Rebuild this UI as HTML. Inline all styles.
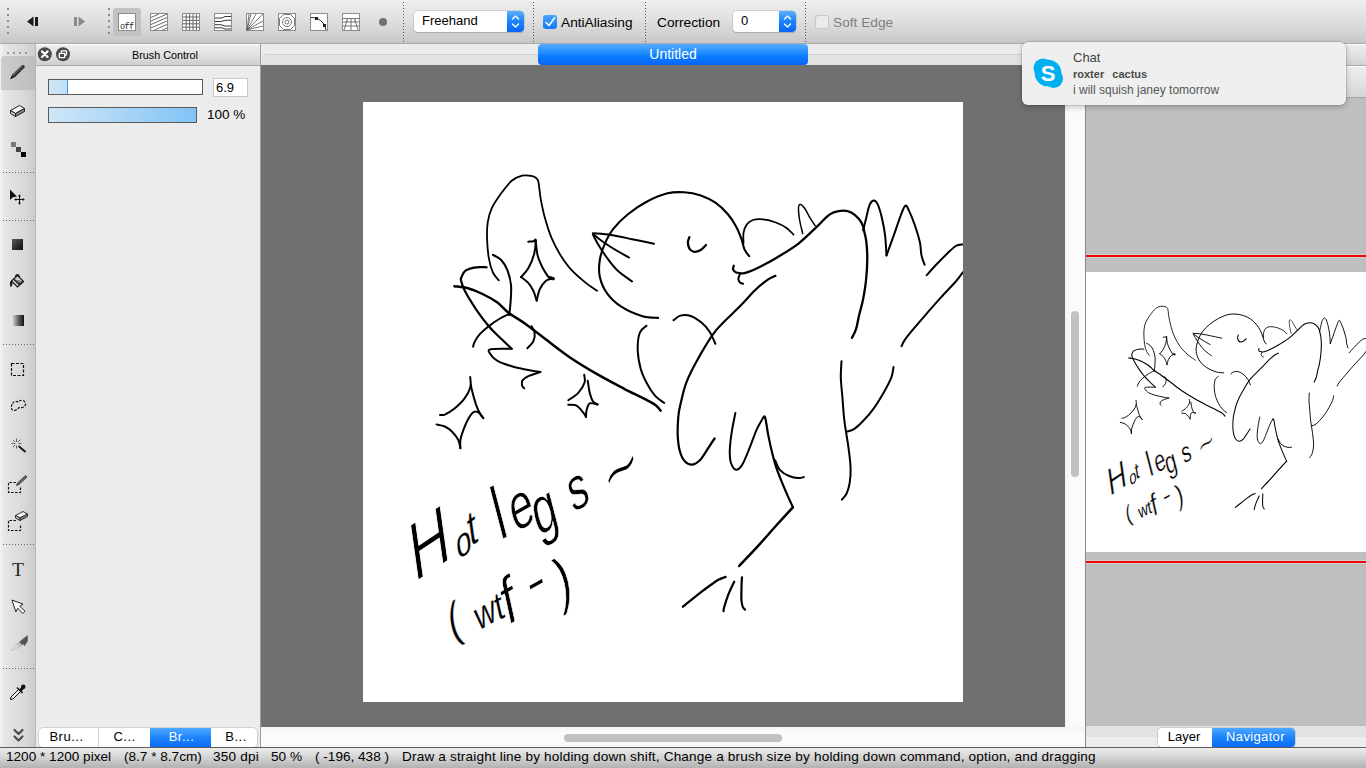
<!DOCTYPE html>
<html lang="en">
<head>
<meta charset="utf-8">
<title>Untitled</title>
<style>
*{box-sizing:border-box;margin:0;padding:0}
html,body{width:1366px;height:768px;overflow:hidden}
body{position:relative;background:#ececec;font-family:"Liberation Sans",sans-serif;font-size:13px;color:#000}
.abs{position:absolute}
#topbar{left:0;top:0;width:1366px;height:44px;background:linear-gradient(#f8f8f8 0,#ececec 1px,#e5e5e5 14px,#d6d6d6 30px,#c7c7c7 100%);border-bottom:1px solid #a9a9a9}
.vdot{position:absolute;width:1px;top:2px;height:40px;background:repeating-linear-gradient(#555 0,#555 1px,transparent 1px,transparent 3px)}
.vdot5{position:absolute;width:2px;top:8px;height:27px;background:repeating-linear-gradient(#8a8a8a 0,#8a8a8a 2px,transparent 2px,transparent 6px)}
.tbi{position:absolute;top:13px;width:18px;height:18px;background:#fff;border:1px solid #8c8c8c}
.sel{position:absolute;top:11px;height:21px;background:#fff;border-radius:4px;box-shadow:0 0 0 .5px #b9b9b9,0 1px 1px rgba(0,0,0,.25);overflow:hidden}
.sel span{position:absolute;left:8px;top:2px;font-size:13px;line-height:15px}
.sel i{position:absolute;right:0;top:0;width:17px;height:21px;background:linear-gradient(#5cb0ff,#1b82fb 50%,#0a64f5)}
.lbl{position:absolute;font-size:13.7px;line-height:16px;white-space:nowrap}
#tools{left:0;top:44px;width:36px;height:703px;background:linear-gradient(90deg,#f4f4f4 0,#e6e6e6 12%,#d8d8d8 70%,#cdcdcd 100%);border-right:1px solid #b6b6b6}
.hdot{position:absolute;left:3px;width:31px;height:1px;background:repeating-linear-gradient(90deg,#666 0,#666 1px,transparent 1px,transparent 3px)}
#panel{left:36px;top:44px;width:224px;height:703px;background:#ececec}
#ptitle{left:0;top:0;width:224px;height:22px;background:linear-gradient(#fff 0,#fff 1px,#ededed 1px,#e2e2e2 50%,#cfcfcf);border-bottom:1px solid #ababab}
.tabs{position:absolute;height:20px;background:#fff;border-radius:4px;box-shadow:0 0 0 .5px #b5b5b5,0 1px 1px rgba(0,0,0,.2);overflow:hidden;font-size:13px}
.tabs span{position:absolute;top:0;height:20px;line-height:17px;text-align:center;white-space:nowrap;letter-spacing:.5px}
.tabs .on{background:linear-gradient(#4fa8ff,#1a83fb 50%,#0b69f6);color:#fff}
#canvasarea{left:261px;top:44px;width:804px;height:683px;background:#707070}
#chead{left:261px;top:44px;width:824px;height:21px;background:#ececec}
#chead div{position:absolute;left:1px;top:10px;right:0;bottom:0;background:#e3e3e3;border-top:1px solid #d3d3d3;border-left:1px solid #dcdcdc;border-top-left-radius:4px}
#doc{left:538px;top:44px;width:270px;height:21px;border-radius:4px;background:linear-gradient(#56abff 0,#1e8bff 45%,#0a7aff 60%,#0a66f5 100%);color:#fff;text-align:center;font-size:14px;line-height:20px}
#paper{left:363px;top:102px;width:600px;height:600px;background:#fff}
#vscroll{left:1065px;top:65px;width:20px;height:662px;background:linear-gradient(90deg,#f3f3f3,#fbfbfb 30%,#fafafa)}
#hscroll{left:261px;top:727px;width:824px;height:20px;background:linear-gradient(#f5f5f5,#fcfcfc 30%,#fafafa)}
#nav{left:1085px;top:44px;width:281px;height:682px;background:#bfbfbf;border-left:1px solid #8a8a8a}
#navfoot{left:1085px;top:726px;width:281px;height:21px;background:linear-gradient(#e3e3e3 0,#e2e2e2 11px,#ededed 11px,#ececec 100%);border-left:1px solid #8a8a8a}
#status{left:0;top:747px;width:1366px;height:21px;background:linear-gradient(#ececec 0,#d8d8d8 40%,#b2b2b2 100%);border-top:1px solid #5c5c5c;font-size:13.6px;line-height:17px;white-space:nowrap}
#status span{position:absolute;top:0}
#note{left:1022px;top:42px;width:324px;height:63px;border-radius:6px;background:#efefef;box-shadow:0 0 0 .5px rgba(0,0,0,.18),0 2px 6px rgba(0,0,0,.22)}
#note div{position:absolute;left:51px;white-space:nowrap}
</style>
</head>
<body>
<!-- top toolbar -->
<div id="topbar" class="abs">
  <div class="vdot5" style="left:7px"></div>
  <div class="vdot5" style="left:108px"></div>
  <svg class="abs" style="left:0;top:0" width="410" height="43" viewBox="0 0 410 43">
    <!-- back / forward -->
    <path d="M27 21.5 L33.5 16.5 V26.5Z" fill="#1a1a1a"/><rect x="35" y="17" width="3" height="9" fill="#1a1a1a"/>
    <path d="M85 21.5 L78.5 16.5 V26.5Z" fill="#8a8a8a"/><rect x="74" y="17" width="3" height="9" fill="#8a8a8a"/>
    <!-- selected off button bg -->
    <rect x="113" y="8" width="28" height="28" rx="3" fill="#c2c2c2"/>
    <g fill="#fff" stroke="#8c8c8c" stroke-width="1">
      <rect x="118.500" y="13.500" width="17" height="17"/>
      <rect x="150.500" y="13.500" width="17" height="17"/>
      <rect x="182.500" y="13.500" width="17" height="17"/>
      <rect x="214.500" y="13.500" width="17" height="17"/>
      <rect x="246.500" y="13.500" width="17" height="17"/>
      <rect x="278.500" y="13.500" width="17" height="17"/>
      <rect x="310.500" y="13.500" width="17" height="17"/>
      <rect x="342.500" y="13.500" width="17" height="17"/>
    </g>
    <text x="120" y="28.700" font-family="Liberation Mono,monospace" font-size="8.500" fill="#222" textLength="14">off</text>
    <!-- hatch -->
    <g stroke="#555" stroke-width=".8" fill="none">
      <path d="M151 17.500L159 14M151 21L167 14M151 24.500L167 17.500M151 28L167 21M154.400 30L167 24.500M162.400 30L167 28" stroke="#444"/>
      <!-- grid -->
      <path d="M186.200 14V30M189.600 14V30M193 14V30M196.400 14V30M183 17H199M183 20.400H199M183 23.800H199M183 27.200H199" stroke="#666" stroke-width="1"/>
      <!-- horizontal curves -->
      <path d="M215 18H222L225 16.500H231M215 21.500H221L225 20.300H231M215 24.700H221L225 26H231M215 27.800H222L225 29H231" stroke="#3a3a3a" stroke-width="1"/>
      <!-- radial -->
      <path d="M247 30L251 14M247 30L256 14M247 30L263 14M247 30L263 21M247 30L263 26M247 30L249 14"/>
      <!-- concentric -->
      <circle cx="287" cy="22" r="2"/><circle cx="287" cy="22" r="4.500"/><path d="M283.500 14.500H290.500L294.500 18.500V25.500L290.500 29.500H283.500L279.500 25.500V18.500Z"/>
      <!-- curve -->
      <path d="M311 17.500C318 17.500 324 21 326 30" stroke="#222" stroke-width="1"/>
      <!-- perspective -->
      <path d="M343 18.500H359M343 22H359M343 26H359M347.500 18.500L344 30M351 18.500V30M354.500 18.500L358 30M347 20.500V22M355 20.500V22"/>
    </g>
    <rect x="315" y="17" width="3" height="3" fill="#222"/><rect x="323" y="24" width="3" height="3" fill="#222"/>
    <circle cx="383" cy="22" r="4" fill="#707070"/>
  </svg>
  <div class="vdot" style="left:403px"></div>
  <div class="sel" style="left:414px;width:110px"><span>Freehand</span><i></i></div>
  <div class="vdot" style="left:533px"></div>
  <div class="abs" style="left:543px;top:15px;width:14px;height:14px;border-radius:3px;background:linear-gradient(#4aa3ff,#1278f5)"></div>
  <div class="lbl" style="left:561px;top:15px">AntiAliasing</div>
  <div class="vdot" style="left:645px"></div>
  <div class="lbl" style="left:657px;top:15px">Correction</div>
  <div class="sel" style="left:733px;width:63px"><span>0</span><i></i></div>
  <div class="vdot" style="left:805px"></div>
  <div class="abs" style="left:815px;top:15px;width:14px;height:14px;border-radius:3px;background:#ebebeb;border:1px solid #c6c6c6"></div>
  <div class="lbl" style="left:833px;top:15px;color:#808080">Soft Edge</div>
  <svg class="abs" style="left:400px;top:0" width="420" height="43" viewBox="400 0 420 43" fill="none" stroke="#fff" stroke-width="1.400" stroke-linecap="round" stroke-linejoin="round">
    <path d="M512.500 19L515.500 16L518.500 19M512.500 24L515.500 27L518.500 24"/>
    <path d="M784.500 19L787.500 16L790.500 19M784.500 24L787.500 27L790.500 24"/>
    <path d="M546 22.500L549 25.500L554.500 18" stroke-width="1.600"/>
  </svg>
</div>

<!-- left tools -->
<div id="tools" class="abs">
<svg class="abs" style="left:0;top:0" width="36" height="703" viewBox="0 44 36 703">
  <defs>
    <linearGradient id="gsel" x1="0" x2="1" y1="0" y2="0"><stop offset="0" stop-color="#cdcdcd"/><stop offset="1" stop-color="#bdbdbd"/></linearGradient>
    <linearGradient id="gsq" x1="0" x2="1" y1="0" y2="1"><stop offset="0" stop-color="#5a5a5a"/><stop offset="1" stop-color="#0a0a0a"/></linearGradient>
    <linearGradient id="ggr" x1="0" x2="1" y1="0" y2="0"><stop offset="0" stop-color="#f4f4f4"/><stop offset=".55" stop-color="#666"/><stop offset="1" stop-color="#111"/></linearGradient>
    <linearGradient id="gkn" x1="0" x2="1" y1="1" y2="0"><stop offset="0" stop-color="#fff"/><stop offset=".5" stop-color="#bbb"/><stop offset=".55" stop-color="#555"/><stop offset="1" stop-color="#444"/></linearGradient>
  </defs>
  <!-- grip dots -->
  <g fill="#9a9a9a"><rect x="7" y="52" width="2" height="2"/><rect x="13" y="52" width="2" height="2"/><rect x="19" y="52" width="2" height="2"/><rect x="25" y="52" width="2" height="2"/></g>
  <!-- selected bg -->
  <path d="M1 90V60Q1 56 5 56H31Q35 56 35 60V90Z" fill="url(#gsel)"/>
  <!-- pencil -->
  <g>
    <path d="M10.300 79L12.300 74.600L22 65.200Q23.600 64.600 24.600 66.200L24.800 67.200L14.800 77.200Z" fill="#2e2e2e"/>
    <path d="M13 75.300L22.600 66.200" stroke="#8a8a8a" stroke-width=".9" fill="none"/>
    <path d="M10.300 79L11.400 76.600L12.800 78Z" fill="#000"/>
  </g>
  <!-- eraser -->
  <g stroke="#1e1e1e" stroke-width="1" stroke-linejoin="round">
    <path d="M10.500 110.500L19.500 105.500L24.500 108.500L15.500 113.500Z" fill="#f4f4f4"/>
    <path d="M10.500 110.500V113.500L15.500 116.500V113.500Z" fill="#d0d0d0"/>
    <path d="M15.500 113.500V116.500L24.500 111.500V108.500Z" fill="#8a8a8a"/>
  </g>
  <!-- dots -->
  <rect x="11" y="142" width="5" height="5" fill="#7a7a7a"/><rect x="16" y="147" width="5" height="5" fill="#444"/><rect x="21" y="152" width="5" height="5" fill="#050505"/>
  <!-- move -->
  <path d="M10 189.500V200L12.800 197.300L17 196.500Z" fill="#111"/>
  <path d="M19.500 195.500V203.500M15.500 199.500H23.500" stroke="#111" stroke-width="1.100" fill="none"/>
  <path d="M19.500 194.200L18 196.300H21ZM19.500 204.800L18 202.700H21ZM14.200 199.500L16.300 198V201ZM24.800 199.500L22.700 198V201Z" fill="#111"/>
  <!-- fill square -->
  <rect x="12" y="239" width="11" height="11" fill="url(#gsq)"/>
  <!-- bucket -->
  <g stroke="#1a1a1a" stroke-width="1.100" stroke-linejoin="round" fill="none">
    <path d="M11.500 281L17.500 275.500L23.500 281.500L17.500 287Z" fill="#d8d8d8"/>
    <path d="M13.500 279L19 284.500L23.500 281.500" fill="#777"/>
    <path d="M15.500 277.500C15.500 274 19 273.500 19.500 277"/>
    <path d="M11.500 281C10 282.500 10.500 285 11 286.500C12 285 12.300 283 11.500 281Z" fill="#1a1a1a"/>
  </g>
  <!-- gradient -->
  <rect x="11" y="315" width="13" height="11" fill="url(#ggr)"/>
  <!-- select rect -->
  <rect x="11.500" y="363.500" width="12" height="12" fill="none" stroke="#111" stroke-width="1.200" stroke-dasharray="3 1.500"/>
  <!-- lasso -->
  <path d="M12.500 403.500C14 400.500 17 401.500 18.500 402C20 399 25.500 400 25.500 404C25.500 407.500 21 408 19 407.500C18 408.500 17 410 14.500 410.500C11 411 10.500 406.500 12.500 403.500Z" fill="none" stroke="#111" stroke-width="1.200" stroke-dasharray="2.600 1.400"/>
  <!-- wand -->
  <path d="M18.500 446L25.500 452" stroke="#111" stroke-width="1.800" fill="none"/>
  <path d="M16.500 438.500V442M16.500 445.500V448.500M11.500 443.500H15M12.800 439.800L15.300 442.300M20.200 439.800L17.700 442.300M12.800 447.200L15.300 444.800M18.500 443.500H21.500" stroke="#555" stroke-width=".9" fill="none"/>
  <!-- select pen -->
  <path d="M16 482.500H8.500V492.500H20.500V487" fill="none" stroke="#111" stroke-width="1.200" stroke-dasharray="2.600 1.400"/>
  <path d="M16.500 485.500L17.500 483L25.500 475.500L27 477L19 484.500Z" fill="#666" stroke="#222" stroke-width=".7"/>
  <!-- select eraser -->
  <path d="M16 520.500H8.500V530.500H20.500V524" fill="none" stroke="#111" stroke-width="1.200" stroke-dasharray="2.600 1.400"/>
  <g stroke="#1e1e1e" stroke-width=".9" stroke-linejoin="round"><path d="M15.500 515.500L23 511.500L27.500 514L20 518Z" fill="#f4f4f4"/><path d="M15.500 515.500V518L20 520.500V518Z" fill="#ccc"/><path d="M20 518V520.500L27.500 516.500V514Z" fill="#888"/></g>
  <!-- T -->
  <text x="18" y="575.500" text-anchor="middle" font-family="Liberation Serif,serif" font-size="19.500" fill="#262626">T</text>
  <!-- pointer -->
  <path d="M12 600L23 604.200L19.700 606.200L25 611.200L22.800 613.500L17.800 608.200L15.800 611.800Z" fill="#fff" stroke="#222" stroke-width="1" stroke-linejoin="round"/>
  <!-- knife -->
  <path d="M11.500 650.500C17 648.500 21 646 24 644L24.500 646L27.500 641V635.500C22 639 15 646 11.500 650.500Z" fill="url(#gkn)" stroke="#888" stroke-width=".4"/>
  <path d="M20 642L27.500 635.500V641L24.500 646L24 644Z" fill="#555"/>
  <!-- eyedropper -->
  <g>
    <path d="M10.500 699.500L11 697L18.500 689.500L20.500 691.500L13 699Z" fill="#e8e8e8" stroke="#111" stroke-width="1"/>
    <path d="M17 687.500L22.500 693" stroke="#111" stroke-width="1.600"/>
    <path d="M19.500 689.500L22 686Q24.500 684.500 25 687.500L21.500 691.500Z" fill="#111"/>
    <circle cx="23.300" cy="686.800" r="2.200" fill="#111"/>
  </g>
  <!-- chevrons -->
  <path d="M14.500 730L18.500 734L22.500 730M14.500 736.500L18.500 740.500L22.500 736.500" fill="none" stroke="#4c4c4c" stroke-width="2.200" stroke-linecap="round" stroke-linejoin="round"/>
</svg>
<div class="hdot" style="top:128px"></div>
<div class="hdot" style="top:176px"></div>
<div class="hdot" style="top:300px"></div>
<div class="hdot" style="top:500px"></div>
<div class="hdot" style="top:624px"></div>

</div>

<!-- brush panel -->
<div id="panel" class="abs">
  <div id="ptitle" class="abs"><svg class="abs" style="left:0;top:0" width="40" height="22" viewBox="0 0 40 22">
    <circle cx="8.800" cy="10.200" r="7" fill="#4a4a4a"/><path d="M6 7.400L11.600 13M11.600 7.400L6 13" stroke="#fff" stroke-width="2.200" stroke-linecap="round"/>
    <circle cx="27" cy="10.200" r="7" fill="#4a4a4a"/><path d="M25.300 8.800V7.300Q25.300 6.800 25.800 6.800H30Q30.500 6.800 30.500 7.300V10.500Q30.500 11 30 11H28.800" fill="none" stroke="#fff" stroke-width="1.300"/><rect x="23.300" y="9.300" width="5.400" height="4.300" rx=".6" fill="none" stroke="#fff" stroke-width="1.300"/>
  </svg><div class="abs" style="left:96px;top:4px;font-size:10.8px;line-height:14px;white-space:nowrap">Brush Control</div></div>
  <div class="abs" style="left:12px;top:35px;width:155px;height:16px;background:#fff;border:1px solid #5a5a5a"><div class="abs" style="left:0;top:0;width:19px;height:14px;background:linear-gradient(90deg,#cfe5f6,#c2dff5);border-right:1px solid #3a9df5"></div></div>
  <div class="abs" style="left:177px;top:34px;width:35px;height:19px;background:#fff;border:1px solid #c9c9c9;font-size:13px;line-height:17px;padding-left:2px">6.9</div>
  <div class="abs" style="left:12px;top:63px;width:149px;height:16px;background:linear-gradient(90deg,#cfe6f7,#a9d5f6 50%,#80c3f6);border:1px solid #5a5a5a"></div>
  <div class="abs" style="left:171px;top:63px;font-size:13.5px;line-height:16px;white-space:nowrap">100 %</div>
  <div class="tabs" style="left:3px;top:684px;width:218px;height:19px;line-height:17px">
    <span style="left:0;width:55px">Bru...</span>
    <span style="left:59px;width:52px;border-left:1px solid #d6d6d6">C...</span>
    <span class="on" style="left:111px;width:61px;padding-left:2px">Br...</span>
    <span style="left:174px;width:46px">B...</span>
  </div>
</div>
<div class="abs" style="left:260px;top:44px;width:1px;height:703px;background:#9b9b9b"></div>

<!-- canvas -->
<div id="canvasarea" class="abs"></div>
<div id="chead" class="abs"><div></div></div>
<div id="doc" class="abs">Untitled</div>
<div id="paper" class="abs"></div>
<div id="vscroll" class="abs"><div class="abs" style="left:6px;top:246px;width:8px;height:166px;border-radius:4px;background:#c1c1c1"></div></div>
<div id="hscroll" class="abs"><div class="abs" style="left:303px;top:7px;width:218px;height:8px;border-radius:4px;background:#c1c1c1"></div></div>

<!-- navigator -->
<div id="nav" class="abs">
  <div class="abs" style="left:0;top:0;width:280px;height:22px;background:linear-gradient(#fff 0,#fff 1px,#ededed 1px,#e2e2e2 55%,#d2d2d2);border-bottom:1px solid #a9a9a9"></div>
  <div class="abs" style="left:0;top:22px;width:280px;height:32px;background:linear-gradient(#fff 0,#fff 1px,#eeeeee 1px,#e2e2e2 55%,#d4d4d4);border-bottom:1px solid #a6a6a6"></div>
  <div class="abs" style="left:0;top:210px;width:280px;height:4px;background:linear-gradient(#c9d6d6 0,#c9d6d6 25%,#fb0007 25%,#fb0007 75%,#c9d6d6 75%)"></div>
  <div class="abs" style="left:0;top:228px;width:280px;height:280px;background:#fff"></div>
  <div class="abs" style="left:0;top:516px;width:280px;height:4px;background:linear-gradient(#c9d6d6 0,#c9d6d6 25%,#fb0007 25%,#fb0007 75%,#c9d6d6 75%)"></div>
</div>
<div id="navfoot" class="abs">
  <div class="tabs" style="left:72px;top:2px;width:137px;height:19px">
    <span style="left:0;width:52px;letter-spacing:0;line-height:17px;height:19px">Layer</span>
    <span class="on" style="left:54px;width:83px;letter-spacing:.35px;padding-left:4px;line-height:17px;height:19px">Navigator</span>
  </div>
</div>

<!-- artwork -->
<svg class="abs" style="left:0;top:0" width="1366" height="768" viewBox="0 0 1366 768">
  <clipPath id="cp"><rect x="363" y="102" width="600" height="600"/></clipPath>
  <g clip-path="url(#cp)" fill="none" stroke="#000" stroke-width="2" stroke-linecap="round" stroke-linejoin="round">
<path stroke-width="1.8" d="M498.8 280.4C497.8 279.1 494.6 276.2 492.9 272.5C491.2 268.8 489.7 263.5 488.8 257.9C487.8 252.4 487.3 245.1 487.1 239.2C486.9 233.3 486.9 227.7 487.7 222.5C488.5 217.3 489.6 212.8 491.9 207.9C494.1 203.1 498.0 197.8 501.2 193.3C504.5 188.8 508.2 183.8 511.7 180.8C515.1 177.9 518.6 176.4 522.1 175.6C525.6 174.9 529.9 175.6 532.5 176.2C535.1 176.9 536.6 178.0 537.7 179.8C538.8 181.6 538.6 183.8 539.2 187.1C539.7 190.4 539.9 194.4 540.8 199.6C541.8 204.8 543.3 212.1 545.0 218.3C546.7 224.6 548.8 231.2 551.2 237.1C553.7 243.0 556.5 248.5 559.6 253.8C562.7 259.0 565.8 263.6 570.0 268.3C574.2 273.0 580.1 278.1 584.6 281.9C589.1 285.6 595.0 289.3 597.1 290.8"/>
<path stroke-width="2.1" d="M658.1 317.9C655.5 317.6 648.6 318.1 642.5 316.2C636.4 314.4 627.6 310.7 621.7 306.9C615.8 303.1 610.7 298.4 607.1 293.3C603.4 288.3 601.0 282.2 599.8 276.7C598.6 271.1 598.9 265.6 599.8 260.0C600.7 254.4 602.7 248.5 605.0 243.3C607.3 238.1 609.5 233.6 613.3 228.8C617.2 223.9 622.4 218.7 627.9 214.2C633.5 209.7 640.1 205.1 646.7 201.7C653.3 198.2 661.2 194.9 667.5 193.3C673.8 191.8 678.6 191.9 684.2 192.3C689.7 192.6 695.6 193.7 700.8 195.4C706.0 197.2 710.9 199.6 715.4 202.7C719.9 205.8 724.4 210.2 727.9 214.2C731.4 218.2 734.0 222.5 736.2 226.7C738.5 230.8 740.1 235.3 741.5 239.2C742.8 243.0 743.3 246.7 744.6 249.6C745.9 252.4 748.4 255.1 749.2 256.2"/>
<path d="M654.0 243.8C650.3 243.0 639.2 240.6 632.1 239.2C625.0 237.7 617.8 236.0 611.2 235.0C604.7 234.0 596.0 233.6 592.9 233.3"/>
<path d="M592.9 234.0C594.2 235.0 597.4 237.8 600.8 240.2C604.2 242.6 608.6 245.7 613.3 248.5C618.0 251.4 626.4 256.0 629.0 257.5"/>
<path d="M592.9 234.6C593.9 236.4 596.4 241.5 598.8 245.4C601.1 249.3 604.0 253.8 607.1 257.9C610.2 262.1 613.3 266.5 617.5 270.4C621.7 274.3 629.7 279.6 632.1 281.5"/>
<path stroke-width="2.3" d="M689.4 237.1C689.1 238.0 687.9 240.4 687.9 242.3C687.9 244.2 688.4 247.0 689.4 248.5C690.3 250.1 691.8 251.3 693.5 251.7C695.3 252.0 697.7 251.7 699.8 250.6C701.9 249.5 705.0 245.9 706.0 245.0"/>
<path stroke-width="1.8" d="M743.5 243.3C743.5 241.6 743.0 236.0 743.5 232.9C744.1 229.8 745.1 226.7 746.7 224.6C748.2 222.4 750.1 220.9 752.9 220.0C755.7 219.1 759.5 219.0 763.3 219.4C767.2 219.8 772.0 221.1 775.8 222.5C779.7 223.9 783.3 225.7 786.2 227.7C789.2 229.7 792.3 233.4 793.5 234.6"/>
<path d="M740.0 274.2C739.7 274.9 738.3 277.4 738.3 278.8C738.3 280.1 739.2 281.7 740.0 282.5C740.8 283.3 742.6 283.5 743.1 283.8"/>
<path stroke-width="2.2" d="M775.4 275.8C774.1 276.5 770.9 277.4 767.5 279.8C764.1 282.2 759.5 285.9 755.0 290.2C750.5 294.5 746.9 299.1 740.4 305.8C733.9 312.6 722.7 322.2 715.8 330.6C709.0 339.1 704.0 348.2 699.2 356.7C694.3 365.2 689.8 373.7 686.7 381.7C683.5 389.7 681.8 398.8 680.4 404.6C679.0 410.4 678.8 411.5 678.3 416.7C677.9 421.8 677.5 429.7 677.7 435.4C678.0 441.1 678.6 446.7 679.8 451.0C681.0 455.4 682.9 459.2 685.0 461.5C687.1 463.7 689.7 464.9 692.3 464.6C694.9 464.2 697.8 462.3 700.6 459.4C703.4 456.4 706.6 450.3 709.0 446.9C711.3 443.4 713.6 439.9 714.6 438.5"/>
<path stroke-width="2.3" d="M733.8 265.8C733.6 266.4 732.7 268.3 733.1 269.4C733.5 270.5 734.3 271.9 736.2 272.5C738.2 273.1 741.1 273.8 744.6 273.1C748.1 272.4 751.5 271.0 757.1 268.3C762.6 265.6 771.0 261.0 777.9 256.9C784.9 252.7 792.4 248.3 798.8 243.3C805.1 238.4 811.6 231.7 816.2 227.3C820.9 222.9 823.9 219.3 826.7 216.9C829.4 214.4 830.1 213.8 832.9 212.7C835.7 211.7 840.2 210.6 843.3 210.6C846.5 210.6 849.1 211.3 851.7 212.7C854.3 214.1 857.0 216.7 859.0 219.0C860.9 221.2 862.3 224.2 863.1 226.2C864.0 228.3 863.6 229.0 864.2 231.5C864.7 233.9 865.7 236.5 866.2 240.8C866.8 245.2 867.3 251.2 867.3 257.5C867.3 263.8 866.9 271.4 866.2 278.3C865.6 285.3 864.3 292.9 863.1 299.2C861.9 305.4 860.1 310.8 859.0 315.8C857.8 320.8 857.2 325.5 856.0 329.2C854.9 332.8 852.6 336.5 851.9 337.9"/>
<path stroke-width="1.5" d="M802.7 233.5C802.2 231.3 800.3 224.3 799.6 220.0C798.9 215.7 798.4 210.1 798.5 207.5C798.7 204.9 799.6 204.2 800.6 204.4C801.7 204.5 803.2 206.3 804.8 208.5C806.4 210.8 808.3 215.0 810.0 217.9C811.7 220.8 814.3 224.5 815.2 225.8"/>
<path d="M863.1 230.4C863.6 228.3 865.2 222.1 866.2 217.9C867.3 213.8 868.2 208.3 869.4 205.4C870.6 202.5 872.2 200.8 873.5 200.6C874.9 200.5 876.3 201.5 877.7 204.4C879.1 207.3 880.7 212.9 881.9 217.9C883.1 223.0 884.2 228.3 885.0 234.6C885.8 240.8 886.2 251.9 886.5 255.4"/>
<path d="M886.5 255.4C887.6 252.3 891.0 243.3 893.3 236.7C895.7 230.1 898.6 221.0 900.6 215.8C902.6 210.7 903.8 206.7 905.2 205.8C906.6 205.0 907.3 207.2 909.0 210.6C910.6 214.0 913.4 220.9 915.2 226.2C917.0 231.6 919.0 238.1 920.0 242.9C921.0 247.8 920.7 251.8 921.5 255.4C922.2 259.1 924.1 263.2 924.6 264.8"/>
<path d="M926.7 275.2C928.4 273.3 933.6 267.4 937.1 263.8C940.6 260.1 944.4 256.3 947.5 253.3C950.6 250.4 953.2 247.5 955.8 246.0C958.4 244.5 961.9 244.7 963.1 244.4"/>
<path d="M963.1 272.1C961.9 273.6 959.5 277.3 955.8 281.5C952.2 285.6 946.2 291.6 941.2 297.1C936.2 302.6 930.5 309.2 925.8 314.6C921.2 319.9 916.8 325.0 913.3 329.2C909.9 333.3 907.0 336.7 905.0 339.6C903.0 342.4 902.0 345.1 901.5 346.2"/>
<path stroke-width="2.2" d="M486.7 267.3C484.9 267.3 479.7 266.8 476.2 267.3C472.8 267.8 468.3 268.9 465.8 270.4C463.4 272.0 462.5 275.0 461.7 276.7C460.9 278.3 460.5 278.1 461.0 280.4C461.6 282.8 462.3 286.0 464.8 290.8C467.3 295.7 472.3 303.7 476.2 309.6C480.2 315.5 484.6 321.4 488.8 326.2C492.9 331.1 497.4 335.0 501.2 338.8C505.1 342.5 509.9 347.1 511.7 348.8"/>
<path d="M511.7 348.8C508.2 348.8 494.5 348.4 490.8 349.2C487.2 349.9 488.8 351.4 489.8 353.3C490.8 355.2 493.4 358.5 497.1 360.6C500.7 362.8 506.5 364.7 511.7 366.2C516.9 367.8 523.5 369.0 528.3 370.0C533.1 371.0 538.4 371.7 540.4 372.1"/>
<path d="M540.4 372.1C538.4 372.8 531.3 374.9 528.3 376.2C525.3 377.6 523.5 378.9 522.5 380.4C521.5 382.0 521.8 384.3 522.1 385.6C522.4 386.9 523.8 387.9 524.2 388.3"/>
<path stroke-width="2.5" d="M454.4 286.2C456.6 286.6 463.2 287.0 467.9 288.3C472.6 289.6 477.6 291.6 482.5 294.0C487.4 296.3 492.7 299.2 497.1 302.3C501.4 305.4 504.0 309.2 508.5 312.7C513.1 316.2 518.1 318.8 524.2 323.1C530.2 327.5 537.4 333.0 545.0 338.8C552.6 344.5 561.3 351.6 570.0 357.5C578.7 363.4 588.1 369.0 597.1 374.2C606.1 379.4 616.2 384.6 624.2 388.8C632.2 392.9 639.8 396.5 645.0 399.2C650.2 401.9 652.8 403.1 655.4 405.0C658.0 406.9 659.8 409.7 660.6 410.6"/>
<path d="M492.9 254.8C494.3 255.7 498.8 257.4 501.2 260.0C503.7 262.6 505.9 266.2 507.5 270.4C509.1 274.6 510.5 279.8 511.0 285.0C511.6 290.2 510.9 296.6 510.6 301.7C510.3 306.7 509.4 313.0 509.2 315.2"/>
<path d="M509.2 313.8C507.5 314.6 502.6 316.9 499.2 319.0C495.8 321.0 492.0 323.6 488.8 326.2C485.5 328.9 481.7 332.0 479.4 334.6C477.0 337.2 475.6 339.9 474.6 341.9C473.5 343.9 473.4 345.9 473.1 346.7"/>
<path d="M531.5 326.2C532.0 327.3 534.2 330.1 534.6 332.5C534.9 334.9 534.8 338.2 533.5 340.8C532.3 343.5 528.3 347.1 527.3 348.3"/>
<path d="M528.3 241.7C529.2 241.6 532.3 241.5 533.5 241.2C534.8 241.0 535.5 238.1 535.6 240.2C535.7 242.3 535.4 249.1 534.2 253.8C533.0 258.4 530.5 264.4 528.3 268.3C526.1 272.2 522.3 275.6 521.0 277.1"/>
<path d="M521.0 277.1C522.3 278.1 526.2 280.6 528.3 282.9C530.4 285.3 532.2 288.3 533.5 291.2C534.9 294.2 536.1 299.1 536.7 300.6"/>
<path d="M536.7 300.6C537.2 298.7 538.2 292.5 539.8 289.2C541.4 285.9 543.8 282.6 546.0 280.8C548.3 279.0 552.1 278.8 553.3 278.3"/>
<path d="M548.1 276.7C547.3 275.3 544.7 271.8 542.9 268.3C541.2 264.9 538.9 260.5 537.7 255.8C536.5 251.1 536.0 242.8 535.6 240.2"/>
<path stroke-width="3.2" d="M549.6 277.5L553.3 278.8"/>
<path d="M470.2 377.1C470.2 378.7 471.4 383.3 470.4 386.9C469.5 390.4 467.3 394.7 464.6 398.3C461.9 402.0 457.5 406.0 454.2 408.8C450.9 411.5 447.2 413.5 444.8 414.6C442.4 415.6 440.8 414.9 440.0 415.0"/>
<path d="M470.8 384.8C471.0 385.7 471.0 386.7 471.9 390.0C472.7 393.3 474.7 400.6 476.0 404.6C477.4 408.6 479.0 411.7 480.2 414.0C481.4 416.2 482.8 417.4 483.3 418.1"/>
<path d="M483.3 418.1C482.6 417.3 480.7 414.0 479.2 412.9C477.6 411.9 475.7 411.0 474.0 411.9C472.2 412.7 470.5 415.2 468.8 418.1C467.0 421.1 464.9 425.9 463.5 429.6C462.2 433.2 460.9 436.9 460.4 440.0C459.9 443.1 460.4 446.9 460.4 448.3"/>
<path d="M436.5 424.4C437.8 424.7 442.2 425.2 444.8 426.5C447.4 427.7 449.8 429.4 452.1 431.7C454.3 433.9 456.9 437.2 458.3 440.0C459.7 442.8 460.1 446.9 460.4 448.3"/>
<path d="M584.2 374.8C584.2 376.1 585.6 379.5 584.6 382.5C583.6 385.5 581.0 390.0 578.3 392.9C575.6 395.9 570.0 399.0 568.3 400.2"/>
<path d="M587.7 380.8C588.1 382.8 588.9 389.5 589.8 392.9C590.7 396.3 591.6 399.3 592.9 401.2C594.2 403.2 596.7 403.9 597.5 404.4"/>
<path d="M568.3 404.8C569.7 404.9 573.9 404.3 576.2 405.4C578.6 406.6 580.9 409.8 582.5 411.7C584.1 413.6 585.5 416.0 586.0 416.9"/>
<path d="M597.5 404.4C596.2 404.2 591.6 402.5 589.8 403.3C588.0 404.2 587.3 407.3 586.7 409.6C586.0 411.8 586.1 415.7 586.0 416.9"/>
<path d="M673.5 320.2C674.7 319.4 677.5 316.3 680.4 315.6C683.3 314.9 687.4 314.9 690.8 316.0C694.3 317.2 698.1 319.7 701.2 322.3C704.4 324.9 707.2 328.1 709.6 331.7C711.9 335.2 714.4 341.7 715.4 343.8"/>
<path d="M646.5 325.8C645.3 327.0 641.2 328.6 639.8 332.7C638.3 336.8 637.5 344.3 637.7 350.4C637.9 356.5 639.3 363.6 640.8 369.2C642.4 374.7 644.7 379.2 647.1 383.8C649.5 388.3 652.6 393.1 655.4 396.2C658.3 399.4 662.7 401.8 664.2 402.9"/>
<path d="M841.5 361.2C841.4 364.0 840.7 371.3 840.8 377.5C841.0 383.7 841.9 391.1 842.5 398.3C843.1 405.6 843.4 412.6 844.4 420.8C845.4 429.1 847.5 439.9 848.5 447.9C849.6 455.9 850.5 462.8 850.6 468.8C850.8 474.7 850.3 479.2 849.6 483.3C848.9 487.5 847.7 491.0 846.5 493.8C845.2 496.5 842.6 498.6 841.9 499.6"/>
<path d="M893.5 367.1C893.2 368.8 893.0 373.0 891.5 377.1C889.9 381.2 887.1 386.5 884.2 391.7C881.2 396.9 877.2 403.5 873.8 408.3C870.3 413.2 866.6 417.4 863.3 420.8C860.0 424.3 856.7 427.4 854.0 429.2C851.2 431.0 847.9 431.2 846.7 431.7"/>
<path d="M735.4 412.9C734.8 416.0 732.8 425.1 731.9 431.2C730.9 437.4 730.0 444.8 729.8 450.0C729.6 455.2 729.8 459.2 730.8 462.5C731.9 465.8 734.1 469.4 736.0 469.8C738.0 470.1 740.0 468.2 742.3 464.6C744.5 460.9 747.2 453.8 749.6 447.9C752.0 442.0 754.6 434.2 756.9 429.2C759.1 424.1 762.1 419.6 763.1 417.7"/>
<path stroke-width="2.2" d="M763.1 417.7C763.5 417.7 764.3 414.8 765.2 417.7C766.1 420.7 767.1 429.3 768.3 435.4C769.5 441.5 771.1 448.6 772.5 454.2C773.9 459.7 774.6 462.8 776.7 468.8C778.8 474.7 782.3 483.2 785.0 489.6C787.7 496.0 791.6 504.3 792.9 507.3"/>
<path stroke-width="2.5" d="M792.9 507.3C790.2 510.2 782.2 518.9 776.7 525.0C771.2 531.1 766.2 536.9 760.0 543.8C753.8 550.6 742.6 562.3 739.2 566.0"/>
<path d="M775.2 460.4C776.0 462.0 777.5 467.2 779.8 469.8C782.1 472.4 786.0 474.7 789.2 476.0C792.3 477.4 796.1 478.0 798.5 478.1C801.0 478.3 802.9 477.3 803.8 477.1"/>
<path stroke-width="2.3" d="M725.6 576.9C724.3 577.4 721.6 577.7 717.9 580.0C714.2 582.3 708.2 586.8 703.3 590.4C698.5 594.1 692.2 599.2 688.8 601.9C685.3 604.6 683.9 605.9 682.9 606.7"/>
<path stroke-width="2.2" d="M734.2 581.7C733.2 583.8 730.0 590.3 728.3 594.6C726.7 598.8 725.0 604.3 724.2 607.1C723.4 609.9 723.6 610.6 723.5 611.2"/>
<path stroke-width="2.2" d="M741.9 577.3C741.8 579.1 741.5 584.4 741.5 588.3C741.4 592.3 741.2 597.7 741.5 600.8C741.7 604.0 742.3 605.6 742.9 607.1C743.5 608.5 744.7 609.2 745.0 609.6"/>
<g fill="#000" stroke="#fff" stroke-linejoin="round" font-family="Liberation Sans,sans-serif">
<text transform="matrix(0.66 -0.44 0.14 1 0 0)"><tspan x="460.6" y="785.7" font-size="80" stroke-width="1.14">H</tspan><tspan x="526.1" y="791.5" font-size="40" stroke-width="0.22">o</tspan><tspan x="545.2" y="786.9" font-size="48" stroke-width="0.40">t</tspan></text>
<text transform="matrix(0.64 -0.36 0.26 1 0 0)"><tspan x="489.8" y="717.3" font-size="72" stroke-width="0.96">l</tspan><tspan x="513.1" y="717.7" font-size="62" stroke-width="0.73">e</tspan><tspan x="543.0" y="732.5" font-size="64" stroke-width="0.77">g</tspan><tspan x="599.3" y="728.7" font-size="58" stroke-width="0.63">s</tspan></text>
<text transform="matrix(0.55 -0.55 0.3 1 0 0)"><tspan x="643.2" y="870.8" font-size="96" stroke-width="3.30">~</tspan></text>
<text transform="matrix(0.72 -0.4 0.22 1 0 0)"><tspan x="385.1" y="794.1" font-size="48" stroke-width="0.40">(</tspan><tspan x="419.8" y="798.9" font-size="38" stroke-width="0.17">w</tspan><tspan x="447.3" y="799.9" font-size="38" stroke-width="0.17">t</tspan><tspan x="457.0" y="808.8" font-size="64" stroke-width="0.77">f</tspan><tspan x="490.5" y="808.2" font-size="84" stroke-width="3.20">-</tspan><tspan x="528.6" y="815.4" font-size="60" stroke-width="0.68">)</tspan></text>
</g>
  </g>
  <g transform="translate(1086 272) scale(.46667) translate(-363 -102)" fill="none" stroke="#000" stroke-width="2" stroke-linecap="round" stroke-linejoin="round">
<path stroke-width="1.8" d="M498.8 280.4C497.8 279.1 494.6 276.2 492.9 272.5C491.2 268.8 489.7 263.5 488.8 257.9C487.8 252.4 487.3 245.1 487.1 239.2C486.9 233.3 486.9 227.7 487.7 222.5C488.5 217.3 489.6 212.8 491.9 207.9C494.1 203.1 498.0 197.8 501.2 193.3C504.5 188.8 508.2 183.8 511.7 180.8C515.1 177.9 518.6 176.4 522.1 175.6C525.6 174.9 529.9 175.6 532.5 176.2C535.1 176.9 536.6 178.0 537.7 179.8C538.8 181.6 538.6 183.8 539.2 187.1C539.7 190.4 539.9 194.4 540.8 199.6C541.8 204.8 543.3 212.1 545.0 218.3C546.7 224.6 548.8 231.2 551.2 237.1C553.7 243.0 556.5 248.5 559.6 253.8C562.7 259.0 565.8 263.6 570.0 268.3C574.2 273.0 580.1 278.1 584.6 281.9C589.1 285.6 595.0 289.3 597.1 290.8"/>
<path stroke-width="2.1" d="M658.1 317.9C655.5 317.6 648.6 318.1 642.5 316.2C636.4 314.4 627.6 310.7 621.7 306.9C615.8 303.1 610.7 298.4 607.1 293.3C603.4 288.3 601.0 282.2 599.8 276.7C598.6 271.1 598.9 265.6 599.8 260.0C600.7 254.4 602.7 248.5 605.0 243.3C607.3 238.1 609.5 233.6 613.3 228.8C617.2 223.9 622.4 218.7 627.9 214.2C633.5 209.7 640.1 205.1 646.7 201.7C653.3 198.2 661.2 194.9 667.5 193.3C673.8 191.8 678.6 191.9 684.2 192.3C689.7 192.6 695.6 193.7 700.8 195.4C706.0 197.2 710.9 199.6 715.4 202.7C719.9 205.8 724.4 210.2 727.9 214.2C731.4 218.2 734.0 222.5 736.2 226.7C738.5 230.8 740.1 235.3 741.5 239.2C742.8 243.0 743.3 246.7 744.6 249.6C745.9 252.4 748.4 255.1 749.2 256.2"/>
<path d="M654.0 243.8C650.3 243.0 639.2 240.6 632.1 239.2C625.0 237.7 617.8 236.0 611.2 235.0C604.7 234.0 596.0 233.6 592.9 233.3"/>
<path d="M592.9 234.0C594.2 235.0 597.4 237.8 600.8 240.2C604.2 242.6 608.6 245.7 613.3 248.5C618.0 251.4 626.4 256.0 629.0 257.5"/>
<path d="M592.9 234.6C593.9 236.4 596.4 241.5 598.8 245.4C601.1 249.3 604.0 253.8 607.1 257.9C610.2 262.1 613.3 266.5 617.5 270.4C621.7 274.3 629.7 279.6 632.1 281.5"/>
<path stroke-width="2.3" d="M689.4 237.1C689.1 238.0 687.9 240.4 687.9 242.3C687.9 244.2 688.4 247.0 689.4 248.5C690.3 250.1 691.8 251.3 693.5 251.7C695.3 252.0 697.7 251.7 699.8 250.6C701.9 249.5 705.0 245.9 706.0 245.0"/>
<path stroke-width="1.8" d="M743.5 243.3C743.5 241.6 743.0 236.0 743.5 232.9C744.1 229.8 745.1 226.7 746.7 224.6C748.2 222.4 750.1 220.9 752.9 220.0C755.7 219.1 759.5 219.0 763.3 219.4C767.2 219.8 772.0 221.1 775.8 222.5C779.7 223.9 783.3 225.7 786.2 227.7C789.2 229.7 792.3 233.4 793.5 234.6"/>
<path d="M740.0 274.2C739.7 274.9 738.3 277.4 738.3 278.8C738.3 280.1 739.2 281.7 740.0 282.5C740.8 283.3 742.6 283.5 743.1 283.8"/>
<path stroke-width="2.2" d="M775.4 275.8C774.1 276.5 770.9 277.4 767.5 279.8C764.1 282.2 759.5 285.9 755.0 290.2C750.5 294.5 746.9 299.1 740.4 305.8C733.9 312.6 722.7 322.2 715.8 330.6C709.0 339.1 704.0 348.2 699.2 356.7C694.3 365.2 689.8 373.7 686.7 381.7C683.5 389.7 681.8 398.8 680.4 404.6C679.0 410.4 678.8 411.5 678.3 416.7C677.9 421.8 677.5 429.7 677.7 435.4C678.0 441.1 678.6 446.7 679.8 451.0C681.0 455.4 682.9 459.2 685.0 461.5C687.1 463.7 689.7 464.9 692.3 464.6C694.9 464.2 697.8 462.3 700.6 459.4C703.4 456.4 706.6 450.3 709.0 446.9C711.3 443.4 713.6 439.9 714.6 438.5"/>
<path stroke-width="2.3" d="M733.8 265.8C733.6 266.4 732.7 268.3 733.1 269.4C733.5 270.5 734.3 271.9 736.2 272.5C738.2 273.1 741.1 273.8 744.6 273.1C748.1 272.4 751.5 271.0 757.1 268.3C762.6 265.6 771.0 261.0 777.9 256.9C784.9 252.7 792.4 248.3 798.8 243.3C805.1 238.4 811.6 231.7 816.2 227.3C820.9 222.9 823.9 219.3 826.7 216.9C829.4 214.4 830.1 213.8 832.9 212.7C835.7 211.7 840.2 210.6 843.3 210.6C846.5 210.6 849.1 211.3 851.7 212.7C854.3 214.1 857.0 216.7 859.0 219.0C860.9 221.2 862.3 224.2 863.1 226.2C864.0 228.3 863.6 229.0 864.2 231.5C864.7 233.9 865.7 236.5 866.2 240.8C866.8 245.2 867.3 251.2 867.3 257.5C867.3 263.8 866.9 271.4 866.2 278.3C865.6 285.3 864.3 292.9 863.1 299.2C861.9 305.4 860.1 310.8 859.0 315.8C857.8 320.8 857.2 325.5 856.0 329.2C854.9 332.8 852.6 336.5 851.9 337.9"/>
<path stroke-width="1.5" d="M802.7 233.5C802.2 231.3 800.3 224.3 799.6 220.0C798.9 215.7 798.4 210.1 798.5 207.5C798.7 204.9 799.6 204.2 800.6 204.4C801.7 204.5 803.2 206.3 804.8 208.5C806.4 210.8 808.3 215.0 810.0 217.9C811.7 220.8 814.3 224.5 815.2 225.8"/>
<path d="M863.1 230.4C863.6 228.3 865.2 222.1 866.2 217.9C867.3 213.8 868.2 208.3 869.4 205.4C870.6 202.5 872.2 200.8 873.5 200.6C874.9 200.5 876.3 201.5 877.7 204.4C879.1 207.3 880.7 212.9 881.9 217.9C883.1 223.0 884.2 228.3 885.0 234.6C885.8 240.8 886.2 251.9 886.5 255.4"/>
<path d="M886.5 255.4C887.6 252.3 891.0 243.3 893.3 236.7C895.7 230.1 898.6 221.0 900.6 215.8C902.6 210.7 903.8 206.7 905.2 205.8C906.6 205.0 907.3 207.2 909.0 210.6C910.6 214.0 913.4 220.9 915.2 226.2C917.0 231.6 919.0 238.1 920.0 242.9C921.0 247.8 920.7 251.8 921.5 255.4C922.2 259.1 924.1 263.2 924.6 264.8"/>
<path d="M926.7 275.2C928.4 273.3 933.6 267.4 937.1 263.8C940.6 260.1 944.4 256.3 947.5 253.3C950.6 250.4 953.2 247.5 955.8 246.0C958.4 244.5 961.9 244.7 963.1 244.4"/>
<path d="M963.1 272.1C961.9 273.6 959.5 277.3 955.8 281.5C952.2 285.6 946.2 291.6 941.2 297.1C936.2 302.6 930.5 309.2 925.8 314.6C921.2 319.9 916.8 325.0 913.3 329.2C909.9 333.3 907.0 336.7 905.0 339.6C903.0 342.4 902.0 345.1 901.5 346.2"/>
<path stroke-width="2.2" d="M486.7 267.3C484.9 267.3 479.7 266.8 476.2 267.3C472.8 267.8 468.3 268.9 465.8 270.4C463.4 272.0 462.5 275.0 461.7 276.7C460.9 278.3 460.5 278.1 461.0 280.4C461.6 282.8 462.3 286.0 464.8 290.8C467.3 295.7 472.3 303.7 476.2 309.6C480.2 315.5 484.6 321.4 488.8 326.2C492.9 331.1 497.4 335.0 501.2 338.8C505.1 342.5 509.9 347.1 511.7 348.8"/>
<path d="M511.7 348.8C508.2 348.8 494.5 348.4 490.8 349.2C487.2 349.9 488.8 351.4 489.8 353.3C490.8 355.2 493.4 358.5 497.1 360.6C500.7 362.8 506.5 364.7 511.7 366.2C516.9 367.8 523.5 369.0 528.3 370.0C533.1 371.0 538.4 371.7 540.4 372.1"/>
<path d="M540.4 372.1C538.4 372.8 531.3 374.9 528.3 376.2C525.3 377.6 523.5 378.9 522.5 380.4C521.5 382.0 521.8 384.3 522.1 385.6C522.4 386.9 523.8 387.9 524.2 388.3"/>
<path stroke-width="2.5" d="M454.4 286.2C456.6 286.6 463.2 287.0 467.9 288.3C472.6 289.6 477.6 291.6 482.5 294.0C487.4 296.3 492.7 299.2 497.1 302.3C501.4 305.4 504.0 309.2 508.5 312.7C513.1 316.2 518.1 318.8 524.2 323.1C530.2 327.5 537.4 333.0 545.0 338.8C552.6 344.5 561.3 351.6 570.0 357.5C578.7 363.4 588.1 369.0 597.1 374.2C606.1 379.4 616.2 384.6 624.2 388.8C632.2 392.9 639.8 396.5 645.0 399.2C650.2 401.9 652.8 403.1 655.4 405.0C658.0 406.9 659.8 409.7 660.6 410.6"/>
<path d="M492.9 254.8C494.3 255.7 498.8 257.4 501.2 260.0C503.7 262.6 505.9 266.2 507.5 270.4C509.1 274.6 510.5 279.8 511.0 285.0C511.6 290.2 510.9 296.6 510.6 301.7C510.3 306.7 509.4 313.0 509.2 315.2"/>
<path d="M509.2 313.8C507.5 314.6 502.6 316.9 499.2 319.0C495.8 321.0 492.0 323.6 488.8 326.2C485.5 328.9 481.7 332.0 479.4 334.6C477.0 337.2 475.6 339.9 474.6 341.9C473.5 343.9 473.4 345.9 473.1 346.7"/>
<path d="M531.5 326.2C532.0 327.3 534.2 330.1 534.6 332.5C534.9 334.9 534.8 338.2 533.5 340.8C532.3 343.5 528.3 347.1 527.3 348.3"/>
<path d="M528.3 241.7C529.2 241.6 532.3 241.5 533.5 241.2C534.8 241.0 535.5 238.1 535.6 240.2C535.7 242.3 535.4 249.1 534.2 253.8C533.0 258.4 530.5 264.4 528.3 268.3C526.1 272.2 522.3 275.6 521.0 277.1"/>
<path d="M521.0 277.1C522.3 278.1 526.2 280.6 528.3 282.9C530.4 285.3 532.2 288.3 533.5 291.2C534.9 294.2 536.1 299.1 536.7 300.6"/>
<path d="M536.7 300.6C537.2 298.7 538.2 292.5 539.8 289.2C541.4 285.9 543.8 282.6 546.0 280.8C548.3 279.0 552.1 278.8 553.3 278.3"/>
<path d="M548.1 276.7C547.3 275.3 544.7 271.8 542.9 268.3C541.2 264.9 538.9 260.5 537.7 255.8C536.5 251.1 536.0 242.8 535.6 240.2"/>
<path stroke-width="3.2" d="M549.6 277.5L553.3 278.8"/>
<path d="M470.2 377.1C470.2 378.7 471.4 383.3 470.4 386.9C469.5 390.4 467.3 394.7 464.6 398.3C461.9 402.0 457.5 406.0 454.2 408.8C450.9 411.5 447.2 413.5 444.8 414.6C442.4 415.6 440.8 414.9 440.0 415.0"/>
<path d="M470.8 384.8C471.0 385.7 471.0 386.7 471.9 390.0C472.7 393.3 474.7 400.6 476.0 404.6C477.4 408.6 479.0 411.7 480.2 414.0C481.4 416.2 482.8 417.4 483.3 418.1"/>
<path d="M483.3 418.1C482.6 417.3 480.7 414.0 479.2 412.9C477.6 411.9 475.7 411.0 474.0 411.9C472.2 412.7 470.5 415.2 468.8 418.1C467.0 421.1 464.9 425.9 463.5 429.6C462.2 433.2 460.9 436.9 460.4 440.0C459.9 443.1 460.4 446.9 460.4 448.3"/>
<path d="M436.5 424.4C437.8 424.7 442.2 425.2 444.8 426.5C447.4 427.7 449.8 429.4 452.1 431.7C454.3 433.9 456.9 437.2 458.3 440.0C459.7 442.8 460.1 446.9 460.4 448.3"/>
<path d="M584.2 374.8C584.2 376.1 585.6 379.5 584.6 382.5C583.6 385.5 581.0 390.0 578.3 392.9C575.6 395.9 570.0 399.0 568.3 400.2"/>
<path d="M587.7 380.8C588.1 382.8 588.9 389.5 589.8 392.9C590.7 396.3 591.6 399.3 592.9 401.2C594.2 403.2 596.7 403.9 597.5 404.4"/>
<path d="M568.3 404.8C569.7 404.9 573.9 404.3 576.2 405.4C578.6 406.6 580.9 409.8 582.5 411.7C584.1 413.6 585.5 416.0 586.0 416.9"/>
<path d="M597.5 404.4C596.2 404.2 591.6 402.5 589.8 403.3C588.0 404.2 587.3 407.3 586.7 409.6C586.0 411.8 586.1 415.7 586.0 416.9"/>
<path d="M673.5 320.2C674.7 319.4 677.5 316.3 680.4 315.6C683.3 314.9 687.4 314.9 690.8 316.0C694.3 317.2 698.1 319.7 701.2 322.3C704.4 324.9 707.2 328.1 709.6 331.7C711.9 335.2 714.4 341.7 715.4 343.8"/>
<path d="M646.5 325.8C645.3 327.0 641.2 328.6 639.8 332.7C638.3 336.8 637.5 344.3 637.7 350.4C637.9 356.5 639.3 363.6 640.8 369.2C642.4 374.7 644.7 379.2 647.1 383.8C649.5 388.3 652.6 393.1 655.4 396.2C658.3 399.4 662.7 401.8 664.2 402.9"/>
<path d="M841.5 361.2C841.4 364.0 840.7 371.3 840.8 377.5C841.0 383.7 841.9 391.1 842.5 398.3C843.1 405.6 843.4 412.6 844.4 420.8C845.4 429.1 847.5 439.9 848.5 447.9C849.6 455.9 850.5 462.8 850.6 468.8C850.8 474.7 850.3 479.2 849.6 483.3C848.9 487.5 847.7 491.0 846.5 493.8C845.2 496.5 842.6 498.6 841.9 499.6"/>
<path d="M893.5 367.1C893.2 368.8 893.0 373.0 891.5 377.1C889.9 381.2 887.1 386.5 884.2 391.7C881.2 396.9 877.2 403.5 873.8 408.3C870.3 413.2 866.6 417.4 863.3 420.8C860.0 424.3 856.7 427.4 854.0 429.2C851.2 431.0 847.9 431.2 846.7 431.7"/>
<path d="M735.4 412.9C734.8 416.0 732.8 425.1 731.9 431.2C730.9 437.4 730.0 444.8 729.8 450.0C729.6 455.2 729.8 459.2 730.8 462.5C731.9 465.8 734.1 469.4 736.0 469.8C738.0 470.1 740.0 468.2 742.3 464.6C744.5 460.9 747.2 453.8 749.6 447.9C752.0 442.0 754.6 434.2 756.9 429.2C759.1 424.1 762.1 419.6 763.1 417.7"/>
<path stroke-width="2.2" d="M763.1 417.7C763.5 417.7 764.3 414.8 765.2 417.7C766.1 420.7 767.1 429.3 768.3 435.4C769.5 441.5 771.1 448.6 772.5 454.2C773.9 459.7 774.6 462.8 776.7 468.8C778.8 474.7 782.3 483.2 785.0 489.6C787.7 496.0 791.6 504.3 792.9 507.3"/>
<path stroke-width="2.5" d="M792.9 507.3C790.2 510.2 782.2 518.9 776.7 525.0C771.2 531.1 766.2 536.9 760.0 543.8C753.8 550.6 742.6 562.3 739.2 566.0"/>
<path d="M775.2 460.4C776.0 462.0 777.5 467.2 779.8 469.8C782.1 472.4 786.0 474.7 789.2 476.0C792.3 477.4 796.1 478.0 798.5 478.1C801.0 478.3 802.9 477.3 803.8 477.1"/>
<path stroke-width="2.3" d="M725.6 576.9C724.3 577.4 721.6 577.7 717.9 580.0C714.2 582.3 708.2 586.8 703.3 590.4C698.5 594.1 692.2 599.2 688.8 601.9C685.3 604.6 683.9 605.9 682.9 606.7"/>
<path stroke-width="2.2" d="M734.2 581.7C733.2 583.8 730.0 590.3 728.3 594.6C726.7 598.8 725.0 604.3 724.2 607.1C723.4 609.9 723.6 610.6 723.5 611.2"/>
<path stroke-width="2.2" d="M741.9 577.3C741.8 579.1 741.5 584.4 741.5 588.3C741.4 592.3 741.2 597.7 741.5 600.8C741.7 604.0 742.3 605.6 742.9 607.1C743.5 608.5 744.7 609.2 745.0 609.6"/>
<g fill="#000" stroke="#fff" stroke-linejoin="round" font-family="Liberation Sans,sans-serif">
<text transform="matrix(0.66 -0.44 0.14 1 0 0)"><tspan x="460.6" y="785.7" font-size="80" stroke-width="1.14">H</tspan><tspan x="526.1" y="791.5" font-size="40" stroke-width="0.22">o</tspan><tspan x="545.2" y="786.9" font-size="48" stroke-width="0.40">t</tspan></text>
<text transform="matrix(0.64 -0.36 0.26 1 0 0)"><tspan x="489.8" y="717.3" font-size="72" stroke-width="0.96">l</tspan><tspan x="513.1" y="717.7" font-size="62" stroke-width="0.73">e</tspan><tspan x="543.0" y="732.5" font-size="64" stroke-width="0.77">g</tspan><tspan x="599.3" y="728.7" font-size="58" stroke-width="0.63">s</tspan></text>
<text transform="matrix(0.55 -0.55 0.3 1 0 0)"><tspan x="643.2" y="870.8" font-size="96" stroke-width="3.30">~</tspan></text>
<text transform="matrix(0.72 -0.4 0.22 1 0 0)"><tspan x="385.1" y="794.1" font-size="48" stroke-width="0.40">(</tspan><tspan x="419.8" y="798.9" font-size="38" stroke-width="0.17">w</tspan><tspan x="447.3" y="799.9" font-size="38" stroke-width="0.17">t</tspan><tspan x="457.0" y="808.8" font-size="64" stroke-width="0.77">f</tspan><tspan x="490.5" y="808.2" font-size="84" stroke-width="3.20">-</tspan><tspan x="528.6" y="815.4" font-size="60" stroke-width="0.68">)</tspan></text>
</g>
  </g>
</svg>

<!-- status bar -->
<div id="status" class="abs">
  <span style="left:6px">1200 * 1200 pixel</span>
  <span style="left:124px">(8.7 * 8.7cm)</span>
  <span style="left:213px;letter-spacing:.2px">350 dpi</span>
  <span style="left:271px">50 %</span>
  <span style="left:315px">( -196, 438 )</span>
  <span style="left:402px;letter-spacing:.16px">Draw a straight line by holding down shift, Change a brush size by holding down command, option, and dragging</span>
</div>

<!-- notification -->
<div id="note" class="abs">
  <svg class="abs" style="left:10px;top:15px" width="32" height="32" viewBox="0 0 32 32">
    <circle cx="11" cy="11" r="9.500" fill="#00aff0"/><circle cx="21.500" cy="21.500" r="9.500" fill="#00aff0"/><circle cx="16" cy="16" r="13.300" fill="#00aff0"/>
    <text x="16.200" y="24" text-anchor="middle" font-family="Liberation Sans,sans-serif" font-weight="bold" font-size="22" fill="#fff">S</text>
  </svg>
  <div style="top:8px;font-size:13px;line-height:16px;color:#444">Chat</div>
  <div style="top:25px;font-size:11px;line-height:14px;font-weight:bold;color:#4a4a4a;word-spacing:1px">roxter&nbsp; cactus</div>
  <div style="top:40.500px;font-size:12px;line-height:14px;color:#555">i will squish janey tomorrow</div>
</div>
</body>
</html>
